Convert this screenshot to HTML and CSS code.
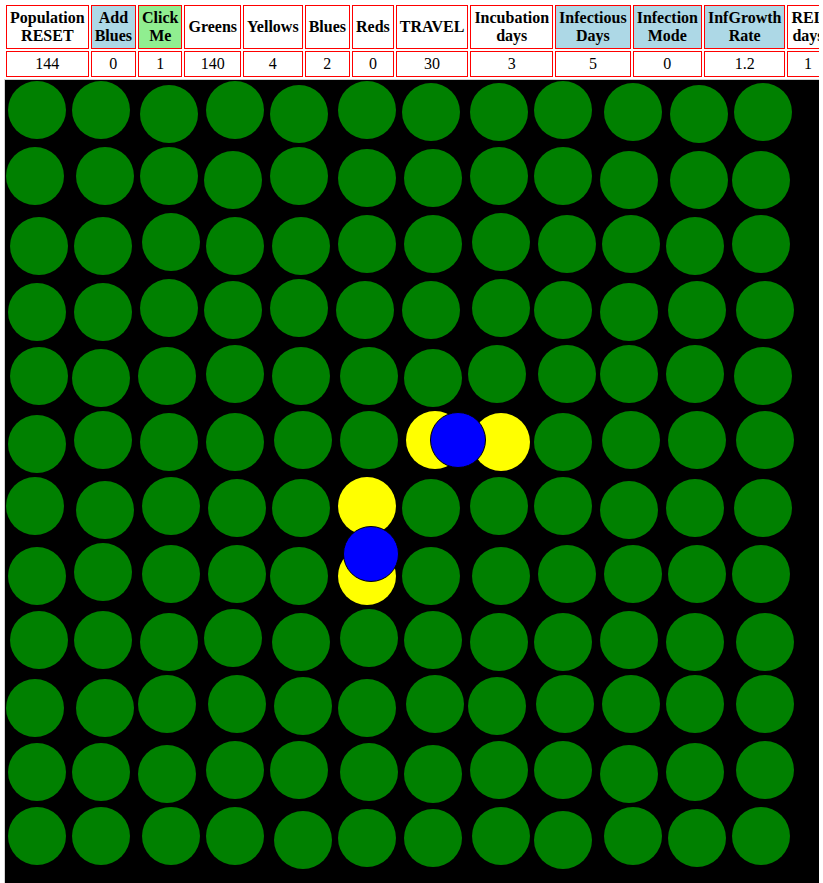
FILE: index.html
```html
<!DOCTYPE html>
<html lang="en">
<head>
    <meta charset="UTF-8">
    <meta name="viewport" content="width=device-width, initial-scale=1.0">
    <title>Epidemic Sim</title>
    <link rel="stylesheet" href="styles.css">
</head>
<body>
    <table class="stats">
        <tr>
            <th>Population<br>RESET</th>
            <th class="blue">Add<br>Blues</th>
            <th class="green">Click<br>Me</th>
            <th>Greens</th>
            <th>Yellows</th>
            <th>Blues</th>
            <th>Reds</th>
            <th>TRAVEL</th>
            <th>Incubation<br>days</th>
            <th class="blue">Infectious<br>Days</th>
            <th class="blue">Infection<br>Mode</th>
            <th class="blue">InfGrowth<br>Rate</th>
            <th>REL<br>days</th>
        </tr>
        <tr>
            <td id="population">144</td>
            <td>0</td>
            <td>1</td>
            <td id="greens">140</td>
            <td id="yellows">4</td>
            <td id="blues">2</td>
            <td id="reds">0</td>
            <td>30</td>
            <td>3</td>
            <td>5</td>
            <td>0</td>
            <td>1.2</td>
            <td>1</td>
        </tr>
    </table>

    <canvas id="world" width="830" height="820"></canvas>

    <script>
        const canvas = document.getElementById('world');
        const ctx = canvas.getContext('2d');

        // people positions (page coords), one row of the grid per line
        const rows = [
            [[37,110],[101,110],[169,114],[235,110],[299,114],[367,110],[431,112],[499,112],[563,110],[633,112],[699,114],[763,112]],
            [[35,176],[105,176],[169,176],[233,180],[299,176],[367,178],[433,178],[499,176],[563,176],[629,180],[699,180],[761,180]],
            [[39,246],[103,246],[171,242],[235,246],[301,246],[367,244],[433,244],[501,242],[567,244],[631,244],[695,246],[761,244]],
            [[37,312],[103,312],[169,308],[233,310],[299,308],[365,310],[431,310],[501,308],[563,310],[629,312],[697,310],[765,310]],
            [[39,376],[101,378],[167,376],[235,374],[301,376],[369,376],[433,378],[497,374],[567,374],[629,374],[695,374],[763,376]],
            [[37,444],[103,440],[169,442],[235,442],[303,440],[369,440],[435,440,'yellow'],[501,442,'yellow'],[563,442],[631,440],[697,440],[765,440]],
            [[35,506],[105,510],[171,506],[237,508],[301,508],[367,506,'yellow'],[431,508],[499,506],[563,506],[629,510],[695,508],[763,508]],
            [[37,576],[103,572],[171,574],[237,574],[299,576],[367,576,'yellow'],[431,576],[501,576],[567,574],[633,574],[697,574],[761,574]],
            [[39,640],[103,640],[169,642],[233,638],[301,642],[369,638],[433,640],[499,642],[563,642],[629,640],[695,642],[765,642]],
            [[35,708],[105,708],[167,704],[237,704],[303,706],[367,708],[435,704],[497,706],[565,704],[631,704],[695,704],[765,704]],
            [[37,772],[101,772],[167,774],[235,770],[299,770],[369,772],[433,774],[499,770],[563,770],[629,774],[695,772],[765,770]],
            [[37,836],[101,836],[171,836],[235,836],[303,840],[367,838],[433,838],[501,836],[563,840],[633,836],[697,838],[761,836]]
        ];
        const blues = [[458,440],[371,554]];

        // canvas inner corner sits at (5, 80) on the page
        ctx.fillStyle = 'black';
        ctx.fillRect(0, 0, canvas.width, canvas.height);
        ctx.translate(-5, -80);

        rows.forEach(row => {
            row.forEach(p => {
                ctx.beginPath();
                ctx.arc(p[0], p[1], 29, 0, Math.PI * 2);
                ctx.fillStyle = p[2] === 'yellow' ? '#ffff00' : '#008000';
                ctx.fill();
            });
        });

        blues.forEach(p => {
            ctx.beginPath();
            ctx.arc(p[0], p[1], 27.5, 0, Math.PI * 2);
            ctx.fillStyle = '#0000ff';
            ctx.fill();
            ctx.lineWidth = 1;
            ctx.strokeStyle = 'black';
            ctx.stroke();
        });
    </script>
</body>
</html>
```

FILE: styles.css
```css
html {
  overflow: hidden; /* sim is wider than the window */
}

body {
  margin: 3px 4px 0;
  font-family: "Liberation Serif", "Times New Roman", serif;
  font-size: 16px;
  color: black;
  background-color: white;
}

.stats {
  border-spacing: 2px;
  white-space: nowrap;
}

.stats th,
.stats td {
  border: 1px solid red;
  padding: 3px;
  line-height: 18px;
  text-align: center;
}

.stats th {
  font-weight: bold;
}

.stats th.blue {
  background-color: lightblue;
}

.stats th.green {
  background-color: lightgreen;
}

#world {
  display: block;
  border: 1px solid lightgray;
  background-color: black;
}
```
